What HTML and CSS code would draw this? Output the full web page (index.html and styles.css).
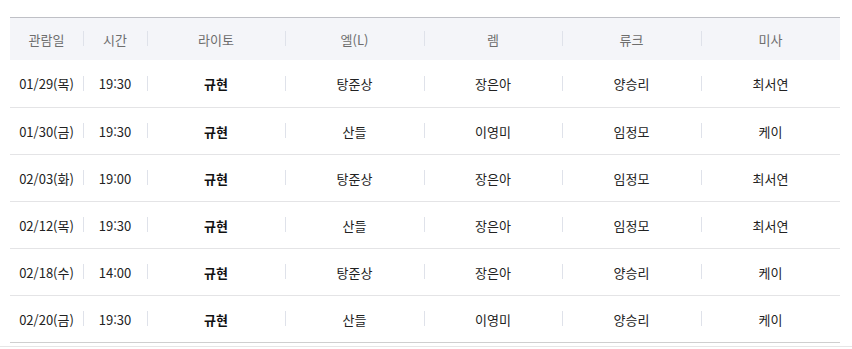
FILE: index.html
```html
<!DOCTYPE html>
<html lang="ko">
<head>
<meta charset="utf-8">
<link rel="stylesheet" href="styles.css">
</head>
<body>
<div class="wrap">
  <table class="cast">
    <colgroup>
      <col class="c1"><col class="c2"><col class="c3"><col class="c4"><col class="c5"><col class="c6"><col class="c7">
    </colgroup>
    <thead>
      <tr>
        <th>관람일</th><th>시간</th><th>라이토</th><th>엘(L)</th><th>렘</th><th>류크</th><th>미사</th>
      </tr>
    </thead>
    <tbody>
      <tr><td>01/29(목)</td><td>19:30</td><td class="b">규현</td><td>탕준상</td><td>장은아</td><td>양승리</td><td>최서연</td></tr>
      <tr><td>01/30(금)</td><td>19:30</td><td class="b">규현</td><td>산들</td><td>이영미</td><td>임정모</td><td>케이</td></tr>
      <tr><td>02/03(화)</td><td>19:00</td><td class="b">규현</td><td>탕준상</td><td>장은아</td><td>임정모</td><td>최서연</td></tr>
      <tr><td>02/12(목)</td><td>19:30</td><td class="b">규현</td><td>산들</td><td>장은아</td><td>임정모</td><td>최서연</td></tr>
      <tr><td>02/18(수)</td><td>14:00</td><td class="b">규현</td><td>탕준상</td><td>장은아</td><td>양승리</td><td>케이</td></tr>
      <tr><td>02/20(금)</td><td>19:30</td><td class="b">규현</td><td>산들</td><td>이영미</td><td>양승리</td><td>케이</td></tr>
    </tbody>
  </table>
</div>
</body>
</html>
```

FILE: styles.css
```css
html, body {
  margin: 0;
  padding: 0;
  background: #fff;
}
body {
  font-family: "Noto Sans CJK KR", "Noto Sans", sans-serif;
  font-size: 13px;
  color: #222;
}
.wrap {
  padding: 17px 12px 0 10px;
  border-bottom: 1px solid #e6e6e6;
  height: 329px;
}
.cast {
  width: 830px;
  border-collapse: collapse;
  table-layout: fixed;
  border-top: 1px solid #bfc0c6;
  border-bottom: 1px solid #cfcfcf;
}
.c1 { width: 73px; }
.c2 { width: 64px; }
.c3 { width: 138px; }
.c4 { width: 139px; }
.c5 { width: 138px; }
.c6 { width: 139px; }
.c7 { width: 139px; }
th, td {
  position: relative;
  text-align: center;
  padding: 0;
  white-space: nowrap;
}
th {
  height: 42px;
  background: #f4f5f9;
  color: #6e6e6e;
  font-weight: normal;
}
td {
  height: 46px;
  border-bottom: 1px solid #e4e4e6;
}
tbody tr:first-child td {
  height: 47px;
}
tbody tr:last-child td {
  border-bottom: none;
}
th + th::before, td + td::before {
  content: "";
  position: absolute;
  left: 0;
  top: 50%;
  width: 1px;
  height: 15px;
  margin-top: -8px;
  background: #dfe2ea;
}
td.b {
  font-weight: bold;
  color: #111;
}
```
